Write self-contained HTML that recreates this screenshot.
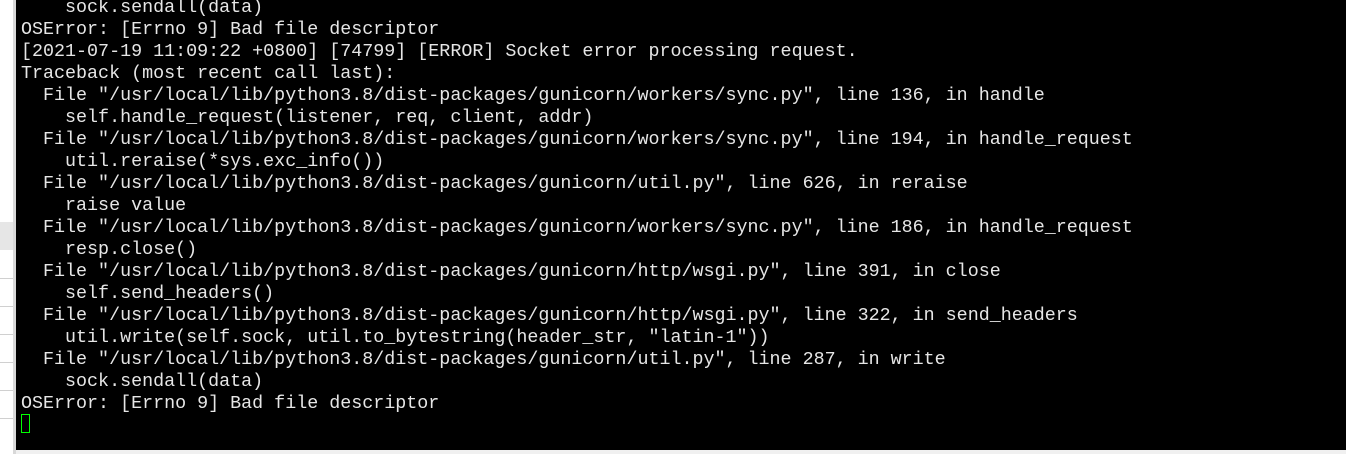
<html><head><style>
body{margin:0;width:1346px;height:454px;overflow:hidden;background:#f0f0f0;position:relative}
#l{position:absolute;left:0;top:0;width:13px;height:454px;background:#fff}
#b{position:absolute;left:13px;top:0;width:3px;height:454px;background:#d8d8d8}
#t{position:absolute;left:16px;top:0;width:1330px;height:450px;background:#000;overflow:hidden}
pre{margin:0;position:absolute;left:5px;top:-3px;font:18.35px/22px "Liberation Mono",monospace;color:#e6e6e6}
.s{position:absolute;left:0;width:13px;height:1px;background:#d0d0d0}
#c{position:absolute;left:5px;top:414px;width:9px;height:19px;border:1px solid #0f0;box-sizing:border-box}
</style></head><body>
<div id="l"></div><div id="b"></div>
<div class="s" style="background:#e6e6e6;height:28px;top:222px"></div>
<div class="s" style="top:278px"></div><div class="s" style="top:306px"></div><div class="s" style="top:334px"></div><div class="s" style="top:362px"></div><div class="s" style="top:390px"></div><div class="s" style="top:418px"></div>
<div id="t"><pre>    sock.sendall(data)
OSError: [Errno 9] Bad file descriptor
[2021-07-19 11:09:22 +0800] [74799] [ERROR] Socket error processing request.
Traceback (most recent call last):
  File "/usr/local/lib/python3.8/dist-packages/gunicorn/workers/sync.py", line 136, in handle
    self.handle_request(listener, req, client, addr)
  File "/usr/local/lib/python3.8/dist-packages/gunicorn/workers/sync.py", line 194, in handle_request
    util.reraise(*sys.exc_info())
  File "/usr/local/lib/python3.8/dist-packages/gunicorn/util.py", line 626, in reraise
    raise value
  File "/usr/local/lib/python3.8/dist-packages/gunicorn/workers/sync.py", line 186, in handle_request
    resp.close()
  File "/usr/local/lib/python3.8/dist-packages/gunicorn/http/wsgi.py", line 391, in close
    self.send_headers()
  File "/usr/local/lib/python3.8/dist-packages/gunicorn/http/wsgi.py", line 322, in send_headers
    util.write(self.sock, util.to_bytestring(header_str, "latin-1"))
  File "/usr/local/lib/python3.8/dist-packages/gunicorn/util.py", line 287, in write
    sock.sendall(data)
OSError: [Errno 9] Bad file descriptor</pre><div id="c"></div></div>
</body></html>
